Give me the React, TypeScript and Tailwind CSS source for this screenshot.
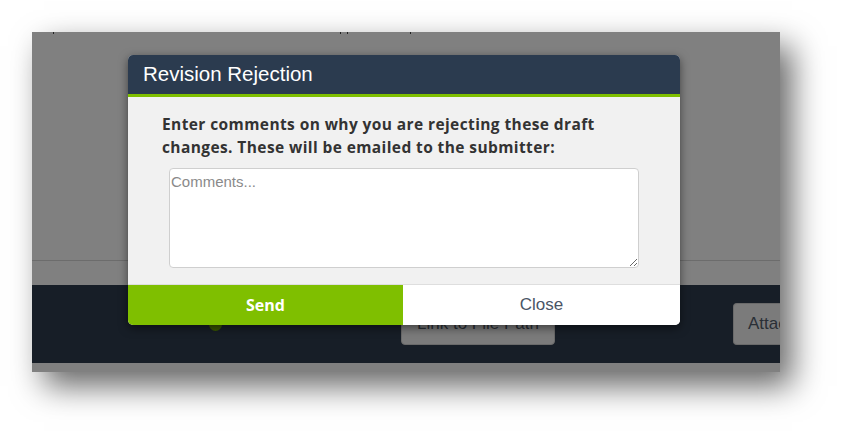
import React from "react";

export default function App() {
  return (
    <div className="w-[845px] h-[438px] bg-white pt-[32px] pl-[32px] overflow-hidden">
      <div className="relative w-[748px] h-[340px] bg-[#808080] shadow-[12px_14px_30px_rgba(0,0,0,0.6)] flex flex-col">
        {/* clipped top text fragments */}
        <div className="absolute top-0 left-[21px] w-[1px] h-[2px] bg-[#222]" />
        <div className="absolute top-0 left-[308px] w-[1px] h-[2px] bg-[#222]" />
        <div className="absolute top-0 left-[315px] w-[1px] h-[2px] bg-[#222]" />
        <div className="absolute top-0 left-[378px] w-[1px] h-[2px] bg-[#222]" />

        <div className="h-[229px] shrink-0 border-b border-[#6c6c6c]" />
        <div className="h-[24px] shrink-0" />
        <div className="h-[78px] shrink-0 bg-[#171e27] flex items-start pt-[18px] overflow-hidden">
          <div className="shrink-0 ml-[177px] mt-[15px] w-[13px] h-[13px] rounded-full bg-[#3a5800]" />
          <div className="shrink-0 ml-[179px] w-[154px] h-[42px] rounded-[4px] bg-[#7b7b7b] border border-[#6a6a6a] flex items-center justify-center text-[17px] text-[#2a2f36] font-['Liberation_Sans',Arial,sans-serif]">
            Link to File Path
          </div>
          <div className="shrink-0 ml-[178px] w-[70px] h-[42px] rounded-l-[4px] bg-[#7b7b7b] border border-r-0 border-[#6a6a6a] flex items-center pl-[14px] text-[17px] text-[#2a2f36] font-['Liberation_Sans',Arial,sans-serif] overflow-hidden whitespace-nowrap">
            Attach
          </div>
        </div>
        <div className="flex-1" />

        {/* dialog */}
        <div className="absolute left-[96px] top-[23px] w-[552px] h-[270px] rounded-[5px] overflow-hidden bg-[#f1f1f1] shadow-[0_3px_10px_rgba(0,0,0,0.5)] flex flex-col">
          <div className="h-[39px] shrink-0 bg-[#2b3b4f] flex items-center px-[15px] text-[20.5px] text-white font-['Liberation_Sans',Arial,sans-serif]">
            Revision Rejection
          </div>
          <div className="h-[3px] shrink-0 bg-[#7fbf00]" />
          <div className="flex-1 flex flex-col px-[34px] pt-[16px]">
            <p className="font-['Open_Sans',sans-serif] font-bold text-[15.5px] tracking-[0.4px] leading-[23px] text-[#333]">
              Enter comments on why you are rejecting these draft changes. These will be emailed to the submitter:
            </p>
            <textarea
              placeholder="Comments..."
              className="mt-[9px] ml-[7px] w-[470px] h-[100px] rounded-[4px] border border-[#cfcfcf] bg-white px-[1px] py-[2px] text-[15px] font-['Liberation_Sans',Arial,sans-serif] placeholder:text-[#8a8a8a] outline-none resize-y"
            />
          </div>
          <div className="h-[41px] shrink-0 border-t border-[#dedede] flex">
            <div className="w-[275px] bg-[#7fbf00] flex items-center justify-center text-white font-bold text-[16px] font-['Open_Sans',sans-serif]">
              Send
            </div>
            <div className="flex-1 bg-white flex items-center justify-center text-[#4a5566] text-[17px] font-['Liberation_Sans',Arial,sans-serif]">
              Close
            </div>
          </div>
        </div>
      </div>
    </div>
  );
}
